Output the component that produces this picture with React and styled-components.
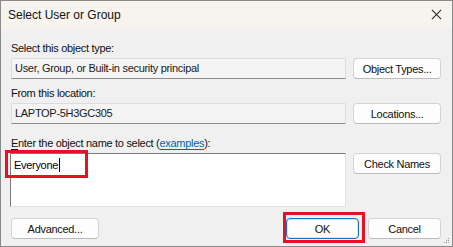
import React from 'react';
import styled, { createGlobalStyle } from 'styled-components';

const GlobalStyle = createGlobalStyle`
    html, body {
        margin: 0;
        padding: 0;
        background: #f0f0f0;
    }
    body {
        font-family: "Liberation Sans", Arial, sans-serif;
        font-size: 11px;
        letter-spacing: -0.3px;
        color: #000;
    }
`;

const App = () => {
    return (
        <>
            <GlobalStyle />
            <Window>
                <TitleBar>
                    <span>Select User or Group</span>
                    <CloseIcon viewBox="0 0 12 12">
                        <path d="M1 1 L11 11 M11 1 L1 11" stroke="#222" strokeWidth="1.1" fill="none" />
                    </CloseIcon>
                </TitleBar>
                <Body>
                    <Label>Select this object type:</Label>
                    <Row>
                        <Field>User, Group, or Built-in security principal</Field>
                        <Button>Object Types...</Button>
                    </Row>

                    <Label $gap={7}>From this location:</Label>
                    <Row>
                        <Field>LAPTOP-5H3GC305</Field>
                        <Button>Locations...</Button>
                    </Row>

                    <Label $gap={12}>
                        <u>E</u>nter the object name to select (<LinkText>examples</LinkText>):
                    </Label>
                    <Row>
                        <TextArea>
                            Everyone<Caret />
                        </TextArea>
                        <Button>Check Names</Button>
                    </Row>

                    <Footer>
                        <Button>Advanced...</Button>
                        <FooterRight>
                            <Button $primary $narrow>OK</Button>
                            <Button $narrow>Cancel</Button>
                        </FooterRight>
                    </Footer>
                </Body>

                <Highlight $left={4} $top={149} $width={83} $height={28} />
                <Highlight $left={282} $top={211} $width={82} $height={31} />
                <Grip viewBox="0 0 6 6">
                    <rect x="4" y="0" width="1" height="1" fill="#9a9a9a" />
                    <rect x="2" y="2" width="1" height="1" fill="#9a9a9a" />
                    <rect x="4" y="2" width="1" height="1" fill="#9a9a9a" />
                    <rect x="0" y="4" width="1" height="1" fill="#9a9a9a" />
                    <rect x="2" y="4" width="1" height="1" fill="#9a9a9a" />
                    <rect x="4" y="4" width="1" height="1" fill="#9a9a9a" />
                </Grip>
            </Window>
        </>
    );
};

export default App;

const Window = styled.div`
    position: relative;
    width: 453px;
    height: 247px;
    box-sizing: border-box;
    border: 1px solid #8a8a8a;
    background: #f0f0f0;
    display: flex;
    flex-direction: column;
    overflow: hidden;
`;

const TitleBar = styled.div`
    height: 27px;
    flex-shrink: 0;
    background: #f7f3ee;
    display: flex;
    align-items: center;
    justify-content: space-between;
    padding: 0 9px 1px 7px;
    font-size: 12px;
    letter-spacing: 0;
    color: #111;
`;

const CloseIcon = styled.svg`
    width: 11px;
    height: 11px;
    margin-right: 1px;
`;

const Body = styled.div`
    flex: 1;
    padding: 12px 11px 0 9px;
    display: flex;
    flex-direction: column;
`;

const Label = styled.div`
    height: 14px;
    line-height: 14px;
    margin-top: ${p => p.$gap || 0}px;
    margin-bottom: 3px;
    padding-left: 1px;
    color: #111;

    u {
        text-decoration-thickness: 1px;
        text-underline-offset: 2px;
    }
`;

const LinkText = styled.span`
    color: #0a5fb4;
    text-decoration: underline;
    text-underline-offset: 2px;
`;

const Row = styled.div`
    display: flex;
    align-items: flex-start;
    gap: 7px;
`;

const Field = styled.div`
    width: 336px;
    height: 21px;
    box-sizing: border-box;
    margin-left: 1px;
    padding: 0 3px;
    line-height: 19px;
    background: #f4f4f4;
    border: 1px solid #dcdcdc;
    border-bottom-color: #8c8c8c;
    border-radius: 2px 2px 0 0;
    color: #1a1a1a;
`;

const TextArea = styled.div`
    position: relative;
    width: 336px;
    height: 54px;
    box-sizing: border-box;
    padding: 4px 3px;
    line-height: 14px;
    background: #fff;
    border: 1px solid #e2e2e2;
    border-top-color: #7a7a7a;
    border-left-color: #7a7a7a;
    color: #000;
`;

const Caret = styled.span`
    display: inline-block;
    width: 1px;
    height: 14px;
    margin-left: 1px;
    vertical-align: -3px;
    background: #000;
`;

const Button = styled.button`
    width: ${p => (p.$narrow ? 73 : 88)}px;
    height: 21px;
    box-sizing: border-box;
    margin: 0;
    padding: 0;
    font-family: inherit;
    font-size: 11px;
    letter-spacing: -0.3px;
    color: #111;
    background: #fdfdfd;
    border: 1px solid ${p => (p.$primary ? '#1a6fc4' : '#d4d4d4')};
    border-bottom-color: ${p => (p.$primary ? '#1a6fc4' : '#bcbcbc')};
    border-radius: 4px;
    box-shadow: ${p => (p.$primary ? 'inset 0 0 0 1px #d8e6f4' : 'none')};
`;

const Footer = styled.div`
    margin-top: 11px;
    padding-left: 1px;
    display: flex;
    justify-content: space-between;
`;

const FooterRight = styled.div`
    display: flex;
    gap: 9px;
`;

const Highlight = styled.div`
    position: absolute;
    left: ${p => p.$left}px;
    top: ${p => p.$top}px;
    width: ${p => p.$width}px;
    height: ${p => p.$height}px;
    box-sizing: border-box;
    border: 3px solid #e81123;
    pointer-events: none;
`;

const Grip = styled.svg`
    position: absolute;
    right: 2px;
    bottom: 2px;
    width: 6px;
    height: 6px;
`;
